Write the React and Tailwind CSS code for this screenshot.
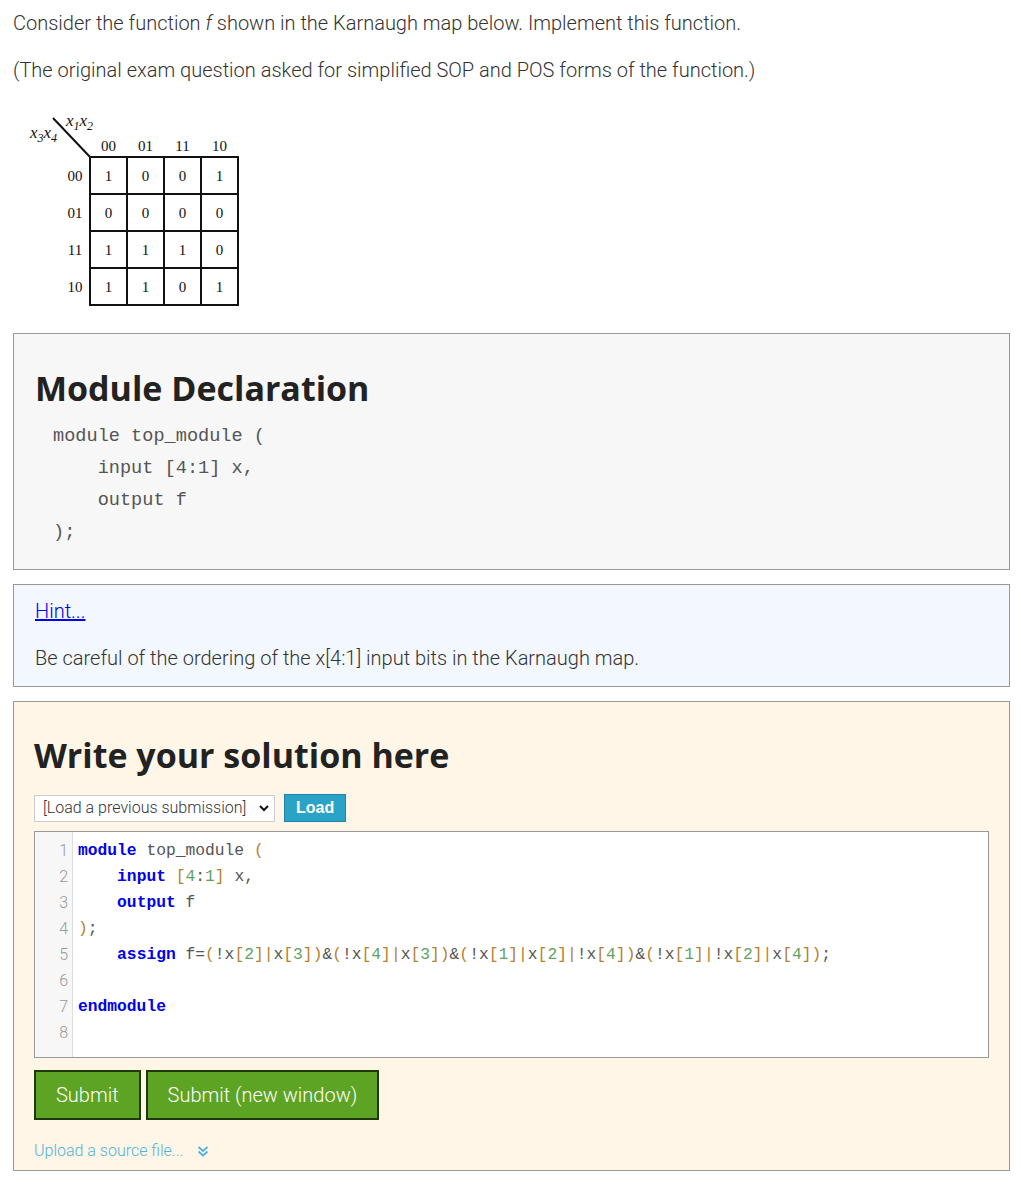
import React from 'react';

const body = { fontFamily: 'Roboto, "Liberation Sans", sans-serif' };
const heading = { fontFamily: '"Open Sans", "Liberation Sans", sans-serif' };
const mono = { fontFamily: '"Liberation Mono", "DejaVu Sans Mono", monospace' };

const kmap = [
    [1, 0, 0, 1],
    [0, 0, 0, 0],
    [1, 1, 1, 0],
    [1, 1, 0, 1],
];
const labels = ['00', '01', '11', '10'];

// karnaugh map figure (an image in the original page)
const KMap = () => (
    <svg width="230" height="205" viewBox="0 0 230 205" className="block">
        <g fontFamily='"Liberation Serif", serif' fill="#111">
            <text x="47" y="22" fontSize="17" fontStyle="italic">x<tspan fontSize="12" dy="4">1</tspan><tspan dy="-4">x</tspan><tspan fontSize="12" dy="4">2</tspan></text>
            <text x="11" y="34" fontSize="17" fontStyle="italic">x<tspan fontSize="12" dy="4">3</tspan><tspan dy="-4">x</tspan><tspan fontSize="12" dy="4">4</tspan></text>
            <line x1="34" y1="14" x2="71" y2="53" stroke="#111" strokeWidth="2" />
            {labels.map((l, i) => (
                <text key={'c' + i} x={71 + 37 * i + 18.5} y="47" fontSize="15" textAnchor="middle">{l}</text>
            ))}
            {labels.map((l, i) => (
                <text key={'r' + i} x="56" y={53 + 37 * i + 24} fontSize="15" textAnchor="middle">{l}</text>
            ))}
            {kmap.map((row, r) => row.map((v, c) => (
                <text key={r + '-' + c} x={71 + 37 * c + 18.5} y={53 + 37 * r + 24} fontSize="15" textAnchor="middle">{v}</text>
            )))}
            <rect x="71" y="53" width="148" height="148" fill="none" stroke="#111" strokeWidth="2" />
            {[1, 2, 3].map((i) => (
                <g key={i}>
                    <line x1={71 + 37 * i} y1="53" x2={71 + 37 * i} y2="201" stroke="#111" strokeWidth="2" />
                    <line x1="71" y1={53 + 37 * i} x2="219" y2={53 + 37 * i} stroke="#111" strokeWidth="2" />
                </g>
            ))}
        </g>
    </svg>
);

const K = ({ children }) => <span className="text-[#0000ee] font-bold">{children}</span>;
const P = ({ children }) => <span className="text-[#b5822f]">{children}</span>;
const N = ({ children }) => <span className="text-[#5fa35f]">{children}</span>;

// x[n] helper for the assign line
const X = ({ n, not }) => (
    <>
        {not && <span>!</span>}x<P>[</P><N>{n}</N><P>]</P>
    </>
);

const codeLines = [
    <><K>module</K> top_module <P>(</P></>,
    <>    <K>input</K> <P>[</P><N>4</N>:<N>1</N><P>]</P> x,</>,
    <>    <K>output</K> f</>,
    <><P>)</P>;</>,
    <>    <K>assign</K> f=<P>(</P><X n="2" not /><P>|</P><X n="3" /><P>)</P>&amp;<P>(</P><X n="4" not /><P>|</P><X n="3" /><P>)</P>&amp;<P>(</P><X n="1" not /><P>|</P><X n="2" /><P>|</P><X n="4" not /><P>)</P>&amp;<P>(</P><X n="1" not /><P>|</P><X n="2" not /><P>|</P><X n="4" /><P>)</P>;</>,
    <></>,
    <><K>endmodule</K></>,
    <></>,
];

export default function App() {
    return (
        <div className="bg-white text-[#333] pl-[13px] pr-[11px] pt-[9px] pb-4 w-[1021px]" style={body}>
            <p className="text-[20px] font-light leading-[28px] mb-[19px]">
                Consider the function <i>f</i> shown in the Karnaugh map below. Implement this function.
            </p>
            <p className="text-[20px] font-light leading-[28px] mb-[20px]">
                (The original exam question asked for simplified SOP and POS forms of the function.)
            </p>

            <div className="pl-[6px] mb-[24px]">
                <KMap />
            </div>

            {/* Module declaration */}
            <div className="border border-[#999] bg-[#f7f7f7] px-[21px] pt-[32px] pb-[20px] mb-[14px]">
                <h2 className="text-[34px] font-bold leading-[44px] text-[#222] mb-[11px]" style={heading}>
                    Module Declaration
                </h2>
                <pre className="text-[18.6px] leading-[32px] text-[#555] pl-[18px]" style={mono}>
{`module top_module (
    input [4:1] x,
    output f
);`}
                </pre>
            </div>

            {/* Hint */}
            <div className="border border-[#999] bg-[#f3f7fe] px-[21px] pt-[13px] pb-[14px] mb-[14px]">
                <a href="#" className="text-[20px] font-light leading-[27px] text-[#0000ee] underline">Hint...</a>
                <p className="text-[20px] font-light leading-[27px] mt-[20px]">
                    Be careful of the ordering of the x[4:1] input bits in the Karnaugh map.
                </p>
            </div>

            {/* Solution */}
            <div className="border border-[#999] bg-[#fff6e7] px-[20px] pt-[31px] pb-[7px]">
                <h2 className="text-[34px] font-bold leading-[44px] text-[#222] mb-[17px]" style={heading}>
                    Write your solution here
                </h2>
                <div className="flex items-center gap-[9px] mb-[9px]">
                    <div className="flex items-center justify-between w-[241px] h-[27px] bg-white border border-[#ccc] pl-[8px] pr-[4px]">
                        <span className="text-[16px] font-light text-[#333]">[Load a previous submission]</span>
                        <svg width="12" height="12" viewBox="0 0 12 12"><path d="M2 4l4 4 4-4" fill="none" stroke="#111" strokeWidth="2" /></svg>
                    </div>
                    <button className="h-[28px] px-[11px] bg-[#2aa3c7] border border-[#1b86a8] text-white font-bold text-[16px]" style={{ fontFamily: '"Liberation Sans", Arial, sans-serif' }}>
                        Load
                    </button>
                </div>

                <div className="flex border border-[#999] bg-white h-[227px]">
                    <div className="w-[38px] bg-[#f7f7f7] border-r border-[#ddd] pt-[6px] pr-[4px] text-right text-[16px] leading-[26px] text-[#999] font-light">
                        {codeLines.map((_, i) => <div key={i}>{i + 1}</div>)}
                    </div>
                    <pre className="pl-[5px] pt-[6px] text-[16.3px] leading-[26px] text-[#555]" style={mono}>
                        {codeLines.map((l, i) => <div key={i} className="h-[26px]">{l}</div>)}
                    </pre>
                </div>

                <div className="flex gap-[5px] mt-[12px]">
                    <button className="h-[50px] px-[20px] bg-[#5ea424] border-2 border-[#1e3a0c] text-white text-[20px] font-light">Submit</button>
                    <button className="h-[50px] px-[20px] bg-[#5ea424] border-2 border-[#1e3a0c] text-white text-[20px] font-light">Submit (new window)</button>
                </div>

                <div className="flex items-center gap-[14px] mt-[19px] text-[16px] font-light text-[#4fb3d9]">
                    <span>Upload a source file...</span>
                    <svg width="12" height="13" viewBox="0 0 12 13" fill="none" stroke="#4fb3d9" strokeWidth="1.8">
                        <path d="M1.5 2l4.5 4 4.5-4" />
                        <path d="M1.5 6.5l4.5 4 4.5-4" />
                    </svg>
                </div>
            </div>
        </div>
    );
}
